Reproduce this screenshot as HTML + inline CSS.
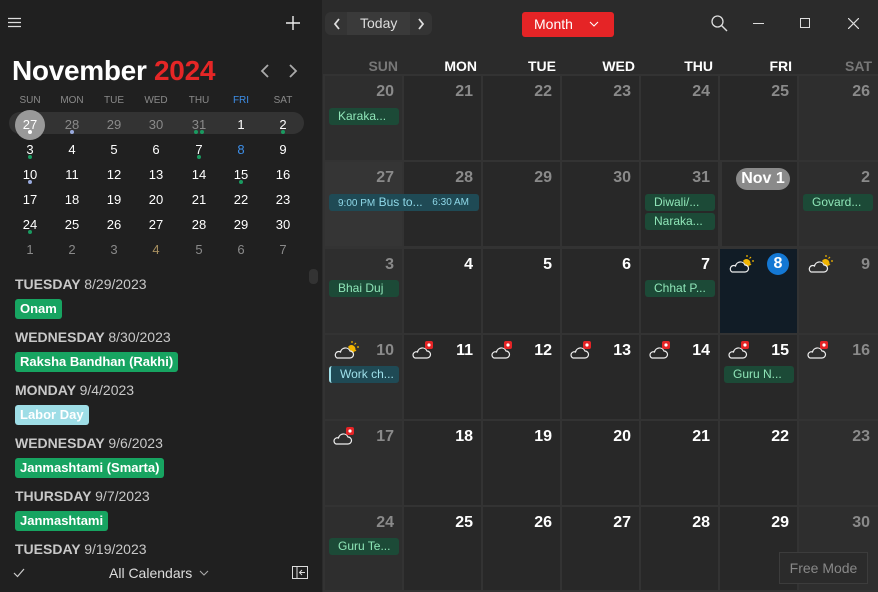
<!DOCTYPE html>
<html><head><meta charset="utf-8"><style>
*{margin:0;padding:0;box-sizing:border-box}
body{width:878px;height:592px;background:#2b2b2b;font-family:"Liberation Sans",sans-serif;position:relative;overflow:hidden;color:#fff}
.a{position:absolute}
#left{left:0;top:0;width:322px;height:592px;background:#202020}
.mh{font-size:10px;color:#8a8a8a;width:42px;text-align:center}
.md{font-size:13px;width:42px;text-align:center;color:#fff}
.mg{color:#8a8a8a}
.dot{width:4px;height:4px;border-radius:2px;background:#1a9a60}
.ah{font-size:14px;font-weight:bold;color:#c8c8c8;left:15px}
.ah span{font-weight:normal}
.chip{left:15px;height:20px;border-radius:3px;background:#17a461;color:#fff;font-size:13px;font-weight:bold;padding:1px 5px;line-height:18px}
.c{background:#282828}
.w{background:#2e2e2e}
.n{position:absolute;right:8px;top:7px;font-size:16px;font-weight:bold;color:#fff}
.g .n,.w .n{color:#8a8a8a}
.ev{position:absolute;height:17px;background:#1c4a37;color:#8fe6b8;font-size:12px;line-height:17px;padding-left:9px;border-radius:3px;left:4px;width:70px;white-space:nowrap;overflow:hidden}
.dh{top:58px;font-size:14px;font-weight:bold;text-align:right;width:77px}
.wx{position:absolute;left:8px;top:5px}
</style></head><body>
<div id="left" class="a">
<svg class="a" style="left:8px;top:17px" width="14" height="12"><path d="M0 1.5H13M0 5.5H13M0 9.5H13" stroke="#ddd" stroke-width="1.3"/></svg>
<svg class="a" style="left:286px;top:16px" width="14" height="14"><path d="M7 0V14M0 7H14" stroke="#eee" stroke-width="1.4"/></svg>
<div class="a" style="left:12px;top:55px;font-size:28px;font-weight:bold;letter-spacing:-0.3px">November <span style="color:#e52626">2024</span></div>
<svg class="a" style="left:259px;top:64px" width="40" height="14"><path d="M9 1L3 7L9 13M31 1L37 7L31 13" stroke="#aaa" stroke-width="1.8" fill="none"/></svg>
<div class="a mh" style="left:9px;top:95px">SUN</div><div class="a mh" style="left:51px;top:95px">MON</div><div class="a mh" style="left:93px;top:95px">TUE</div><div class="a mh" style="left:135px;top:95px">WED</div><div class="a mh" style="left:178px;top:95px">THU</div><div class="a mh" style="left:220px;top:95px;color:#3d8ee8">FRI</div><div class="a mh" style="left:262px;top:95px">SAT</div>
<div class="a" style="left:9px;top:112px;width:295px;height:22px;border-radius:11px;background:#333"></div>
<div class="a" style="left:15px;top:110px;width:30px;height:30px;border-radius:15px;background:#999"></div>
<div class="a md" style="left:9px;top:117px">27</div><div class="a md mg" style="left:51px;top:117px">28</div><div class="a md mg" style="left:93px;top:117px">29</div><div class="a md mg" style="left:135px;top:117px">30</div><div class="a md mg" style="left:178px;top:117px">31</div><div class="a md" style="left:220px;top:117px">1</div><div class="a md" style="left:262px;top:117px">2</div>
<div class="a md" style="left:9px;top:142px">3</div><div class="a md" style="left:51px;top:142px">4</div><div class="a md" style="left:93px;top:142px">5</div><div class="a md" style="left:135px;top:142px">6</div><div class="a md" style="left:178px;top:142px">7</div><div class="a md" style="left:220px;top:142px;color:#3d8ee8">8</div><div class="a md" style="left:262px;top:142px">9</div>
<div class="a md" style="left:9px;top:167px">10</div><div class="a md" style="left:51px;top:167px">11</div><div class="a md" style="left:93px;top:167px">12</div><div class="a md" style="left:135px;top:167px">13</div><div class="a md" style="left:178px;top:167px">14</div><div class="a md" style="left:220px;top:167px">15</div><div class="a md" style="left:262px;top:167px">16</div>
<div class="a md" style="left:9px;top:192px">17</div><div class="a md" style="left:51px;top:192px">18</div><div class="a md" style="left:93px;top:192px">19</div><div class="a md" style="left:135px;top:192px">20</div><div class="a md" style="left:178px;top:192px">21</div><div class="a md" style="left:220px;top:192px">22</div><div class="a md" style="left:262px;top:192px">23</div>
<div class="a md" style="left:9px;top:217px">24</div><div class="a md" style="left:51px;top:217px">25</div><div class="a md" style="left:93px;top:217px">26</div><div class="a md" style="left:135px;top:217px">27</div><div class="a md" style="left:178px;top:217px">28</div><div class="a md" style="left:220px;top:217px">29</div><div class="a md" style="left:262px;top:217px">30</div>
<div class="a md mg" style="left:9px;top:242px">1</div><div class="a md mg" style="left:51px;top:242px">2</div><div class="a md mg" style="left:93px;top:242px">3</div><div class="a md mg" style="left:135px;top:242px;color:#a89060">4</div><div class="a md mg" style="left:178px;top:242px">5</div><div class="a md mg" style="left:220px;top:242px">6</div><div class="a md mg" style="left:262px;top:242px">7</div>
<div class="a dot" style="left:28px;top:130px;background:#fff"></div><div class="a dot" style="left:70px;top:130px;background:#9ad"></div><div class="a dot" style="left:194px;top:130px"></div><div class="a dot" style="left:200px;top:130px"></div><div class="a dot" style="left:281px;top:130px"></div>
<div class="a dot" style="left:28px;top:155px"></div><div class="a dot" style="left:197px;top:155px"></div>
<div class="a dot" style="left:28px;top:180px;background:#9ad"></div><div class="a dot" style="left:239px;top:180px"></div>
<div class="a dot" style="left:28px;top:230px"></div>
<div class="a" style="left:309px;top:269px;width:9px;height:15px;border-radius:4px;background:#333"></div>
<div class="a ah" style="top:276px">TUESDAY <span>8/29/2023</span></div>
<div class="a chip" style="top:299px">Onam</div>
<div class="a ah" style="top:329px">WEDNESDAY <span>8/30/2023</span></div>
<div class="a chip" style="top:352px">Raksha Bandhan (Rakhi)</div>
<div class="a ah" style="top:382px">MONDAY <span>9/4/2023</span></div>
<div class="a chip" style="top:405px;background:#9edde6">Labor Day</div>
<div class="a ah" style="top:435px">WEDNESDAY <span>9/6/2023</span></div>
<div class="a chip" style="top:458px">Janmashtami (Smarta)</div>
<div class="a ah" style="top:488px">THURSDAY <span>9/7/2023</span></div>
<div class="a chip" style="top:511px">Janmashtami</div>
<div class="a ah" style="top:541px">TUESDAY <span>9/19/2023</span></div>
<div class="a" style="left:0;top:560px;width:322px;height:32px;background:#202020"></div>
<svg class="a" style="left:13px;top:568px" width="12" height="10"><path d="M1 5L4.5 8.5L11 1" stroke="#ccc" stroke-width="1.2" fill="none"/></svg>
<div class="a" style="left:109px;top:565px;font-size:14px;color:#ddd">All Calendars</div>
<svg class="a" style="left:199px;top:570px" width="10" height="6"><path d="M1 1L5 5L9 1" stroke="#aaa" stroke-width="1.1" fill="none"/></svg>
<svg class="a" style="left:292px;top:566px" width="16" height="13"><rect x="0.5" y="0.5" width="15" height="12" stroke="#ddd" fill="none"/><path d="M5 0V13M13 6.5H8M10 4L7.5 6.5L10 9" stroke="#ddd" fill="none"/></svg>
</div>
<!-- top bar -->
<div class="a" style="left:325px;top:12px;width:107px;height:23px;border-radius:6px;background:#343434"></div>
<div class="a" style="left:347px;top:12px;width:63px;height:23px;background:#3a3a3a"></div>
<svg class="a" style="left:333px;top:17px" width="100" height="14"><path d="M6 2L2 7L6 12M86 2L90 7L86 12" stroke="#ddd" stroke-width="1.8" fill="none"/></svg>
<div class="a" style="left:360px;top:15px;font-size:14px;color:#ddd">Today</div>
<div class="a" style="left:522px;top:12px;width:92px;height:25px;border-radius:3px;background:#e52426"></div>
<div class="a" style="left:534px;top:16px;font-size:14px;color:#fff">Month</div>
<svg class="a" style="left:589px;top:21px" width="10" height="6"><path d="M1 1L5 5L9 1" stroke="#fff" stroke-width="1.1" fill="none"/></svg>
<svg class="a" style="left:711px;top:15px" width="17" height="17"><circle cx="6.5" cy="6.5" r="5.5" stroke="#ddd" stroke-width="1.3" fill="none"/><path d="M10.5 10.5L16 16" stroke="#ddd" stroke-width="1.4"/></svg>
<div class="a" style="left:753px;top:23px;width:11px;height:1px;background:#ddd"></div>
<div class="a" style="left:800px;top:18px;width:10px;height:10px;border:1.2px solid #ddd"></div>
<svg class="a" style="left:848px;top:18px" width="11" height="11"><path d="M0 0L11 11M11 0L0 11" stroke="#ddd" stroke-width="1.2"/></svg>
<div class="a dh" style="left:321px;color:#777">SUN</div><div class="a dh" style="left:400px">MON</div><div class="a dh" style="left:479px">TUE</div><div class="a dh" style="left:558px">WED</div><div class="a dh" style="left:636px">THU</div><div class="a dh" style="left:715px">FRI</div><div class="a dh" style="left:795px;color:#777">SAT</div>
<div class="a" style="left:323px;top:74px;width:555px;height:518px;background:#333"></div>
<!-- row1 -->
<div class="a w" style="left:325px;top:76px;width:77px;height:84px"><div class="n">20</div><div class="ev" style="top:32px">Karaka...</div></div>
<div class="a c g" style="left:404px;top:76px;width:77px;height:84px"><div class="n">21</div></div>
<div class="a c g" style="left:483px;top:76px;width:77px;height:84px"><div class="n">22</div></div>
<div class="a c g" style="left:562px;top:76px;width:77px;height:84px"><div class="n">23</div></div>
<div class="a c g" style="left:641px;top:76px;width:77px;height:84px"><div class="n">24</div></div>
<div class="a c g" style="left:720px;top:76px;width:77px;height:84px"><div class="n">25</div></div>
<div class="a w" style="left:799px;top:76px;width:79px;height:84px"><div class="n">26</div></div>
<!-- row2 -->
<div class="a w" style="left:325px;top:162px;width:77px;height:84px;background:#353535"><div class="n">27</div></div>
<div class="a c g" style="left:404px;top:162px;width:77px;height:84px"><div class="n">28</div></div>
<div class="a c g" style="left:483px;top:162px;width:77px;height:84px"><div class="n">29</div></div>
<div class="a c g" style="left:562px;top:162px;width:77px;height:84px"><div class="n">30</div></div>
<div class="a c g" style="left:641px;top:162px;width:77px;height:84px"><div class="n">31</div><div class="ev" style="top:32px">Diwali/...</div><div class="ev" style="top:51px">Naraka...</div></div>
<div class="a c" style="left:722px;top:162px;width:75px;height:84px"><div class="a" style="left:14px;top:6px;width:54px;height:22px;border-radius:11px;background:#8a8a8a;color:#fff;font-weight:bold;font-size:16px;text-align:center;line-height:22px">Nov 1</div></div>
<div class="a w" style="left:799px;top:162px;width:79px;height:84px"><div class="n">2</div><div class="ev" style="top:32px">Govard...</div></div>
<div class="a" style="left:329px;top:194px;width:150px;height:17px;border-radius:3px;background:#1f4a55;color:#8fd8e8;font-size:12px;line-height:17px"><span style="font-size:10px;margin-left:9px">9:00 PM</span> Bus to...<span style="font-size:10px;position:absolute;right:10px">6:30 AM</span></div>
<!-- row3 -->
<div class="a w" style="left:325px;top:249px;width:77px;height:84px"><div class="n">3</div><div class="ev" style="top:31px">Bhai Duj</div></div>
<div class="a c" style="left:404px;top:249px;width:77px;height:84px"><div class="n">4</div></div>
<div class="a c" style="left:483px;top:249px;width:77px;height:84px"><div class="n">5</div></div>
<div class="a c" style="left:562px;top:249px;width:77px;height:84px"><div class="n">6</div></div>
<div class="a c" style="left:641px;top:249px;width:77px;height:84px"><div class="n">7</div><div class="ev" style="top:31px">Chhat P...</div></div>
<div class="a" style="left:720px;top:249px;width:77px;height:84px;background:#111c26"><div class="a" style="right:8px;top:4px;width:22px;height:22px;border-radius:11px;background:#1478d4;font-weight:bold;font-size:16px;text-align:center;line-height:22px">8</div>
<svg class="wx" width="26" height="20"><path d="M15 7a4 4 0 1 1 4 6" fill="#f0b400"/><path d="M19 1v2M24 7h2M23 3l-1.5 1.5M23 11l-1.5-1.5" stroke="#f0b400" stroke-width="1.2"/><path d="M4 18h13a3.5 3.5 0 0 0 0-7a5 5 0 0 0-9.5 1a3 3 0 0 0-3.5 6z" stroke="#eee" stroke-width="1.2" fill="#111c26"/></svg></div>
<div class="a w" style="left:799px;top:249px;width:79px;height:84px"><div class="n">9</div>
<svg class="wx" width="26" height="20"><path d="M15 7a4 4 0 1 1 4 6" fill="#f0b400"/><path d="M19 1v2M24 7h2M23 3l-1.5 1.5M23 11l-1.5-1.5" stroke="#f0b400" stroke-width="1.2"/><path d="M4 18h13a3.5 3.5 0 0 0 0-7a5 5 0 0 0-9.5 1a3 3 0 0 0-3.5 6z" stroke="#eee" stroke-width="1.2" fill="#2e2e2e"/></svg></div>
<!-- row4 -->
<div class="a w" style="left:325px;top:335px;width:77px;height:84px"><div class="n">10</div>
<svg class="wx" width="26" height="20"><path d="M15 7a4 4 0 1 1 4 6" fill="#f0b400"/><path d="M19 1v2M24 7h2M23 3l-1.5 1.5M23 11l-1.5-1.5" stroke="#f0b400" stroke-width="1.2"/><path d="M4 18h13a3.5 3.5 0 0 0 0-7a5 5 0 0 0-9.5 1a3 3 0 0 0-3.5 6z" stroke="#eee" stroke-width="1.2" fill="#2e2e2e"/></svg>
<div class="ev" style="top:31px;background:#1f4a55;color:#9fe0ea;border-left:2px solid #9fe0ea">Work ch...</div></div>
<div class="a c" style="left:404px;top:335px;width:77px;height:84px"><div class="n">11</div><svg class="wx" width="24" height="20"><path d="M3 18h12a3.5 3.5 0 0 0 0-7a5 5 0 0 0-9.5 1a3 3 0 0 0-2.5 6z" stroke="#eee" stroke-width="1.2" fill="none"/><rect x="13" y="1" width="8" height="8" rx="2" fill="#e52426"/><circle cx="17" cy="5" r="1.6" fill="#fff"/></svg></div>
<div class="a c" style="left:483px;top:335px;width:77px;height:84px"><div class="n">12</div><svg class="wx" width="24" height="20"><path d="M3 18h12a3.5 3.5 0 0 0 0-7a5 5 0 0 0-9.5 1a3 3 0 0 0-2.5 6z" stroke="#eee" stroke-width="1.2" fill="none"/><rect x="13" y="1" width="8" height="8" rx="2" fill="#e52426"/><circle cx="17" cy="5" r="1.6" fill="#fff"/></svg></div>
<div class="a c" style="left:562px;top:335px;width:77px;height:84px"><div class="n">13</div><svg class="wx" width="24" height="20"><path d="M3 18h12a3.5 3.5 0 0 0 0-7a5 5 0 0 0-9.5 1a3 3 0 0 0-2.5 6z" stroke="#eee" stroke-width="1.2" fill="none"/><rect x="13" y="1" width="8" height="8" rx="2" fill="#e52426"/><circle cx="17" cy="5" r="1.6" fill="#fff"/></svg></div>
<div class="a c" style="left:641px;top:335px;width:77px;height:84px"><div class="n">14</div><svg class="wx" width="24" height="20"><path d="M3 18h12a3.5 3.5 0 0 0 0-7a5 5 0 0 0-9.5 1a3 3 0 0 0-2.5 6z" stroke="#eee" stroke-width="1.2" fill="none"/><rect x="13" y="1" width="8" height="8" rx="2" fill="#e52426"/><circle cx="17" cy="5" r="1.6" fill="#fff"/></svg></div>
<div class="a c" style="left:720px;top:335px;width:77px;height:84px"><div class="n">15</div><svg class="wx" width="24" height="20"><path d="M3 18h12a3.5 3.5 0 0 0 0-7a5 5 0 0 0-9.5 1a3 3 0 0 0-2.5 6z" stroke="#eee" stroke-width="1.2" fill="none"/><rect x="13" y="1" width="8" height="8" rx="2" fill="#e52426"/><circle cx="17" cy="5" r="1.6" fill="#fff"/></svg><div class="ev" style="top:31px">Guru N...</div></div>
<div class="a w" style="left:799px;top:335px;width:79px;height:84px"><div class="n">16</div><svg class="wx" width="24" height="20"><path d="M3 18h12a3.5 3.5 0 0 0 0-7a5 5 0 0 0-9.5 1a3 3 0 0 0-2.5 6z" stroke="#eee" stroke-width="1.2" fill="none"/><rect x="13" y="1" width="8" height="8" rx="2" fill="#e52426"/><circle cx="17" cy="5" r="1.6" fill="#fff"/></svg></div>
<!-- row5 -->
<div class="a w" style="left:325px;top:421px;width:77px;height:84px"><div class="n">17</div><svg class="wx" width="24" height="20"><path d="M3 18h12a3.5 3.5 0 0 0 0-7a5 5 0 0 0-9.5 1a3 3 0 0 0-2.5 6z" stroke="#eee" stroke-width="1.2" fill="none"/><rect x="13" y="1" width="8" height="8" rx="2" fill="#e52426"/><circle cx="17" cy="5" r="1.6" fill="#fff"/></svg></div>
<div class="a c" style="left:404px;top:421px;width:77px;height:84px"><div class="n">18</div></div>
<div class="a c" style="left:483px;top:421px;width:77px;height:84px"><div class="n">19</div></div>
<div class="a c" style="left:562px;top:421px;width:77px;height:84px"><div class="n">20</div></div>
<div class="a c" style="left:641px;top:421px;width:77px;height:84px"><div class="n">21</div></div>
<div class="a c" style="left:720px;top:421px;width:77px;height:84px"><div class="n">22</div></div>
<div class="a w" style="left:799px;top:421px;width:79px;height:84px"><div class="n">23</div></div>
<!-- row6 -->
<div class="a w" style="left:325px;top:507px;width:77px;height:83px"><div class="n">24</div><div class="ev" style="top:31px">Guru Te...</div></div>
<div class="a c" style="left:404px;top:507px;width:77px;height:83px"><div class="n">25</div></div>
<div class="a c" style="left:483px;top:507px;width:77px;height:83px"><div class="n">26</div></div>
<div class="a c" style="left:562px;top:507px;width:77px;height:83px"><div class="n">27</div></div>
<div class="a c" style="left:641px;top:507px;width:77px;height:83px"><div class="n">28</div></div>
<div class="a c" style="left:720px;top:507px;width:77px;height:83px"><div class="n">29</div></div>
<div class="a w" style="left:799px;top:507px;width:79px;height:83px"><div class="n">30</div></div>
<div class="a" style="left:779px;top:552px;width:89px;height:32px;background:#2b2b2b;border:1px solid #3c3c3c;color:#888;font-size:14px;text-align:center;line-height:30px">Free Mode</div>
</body></html>
